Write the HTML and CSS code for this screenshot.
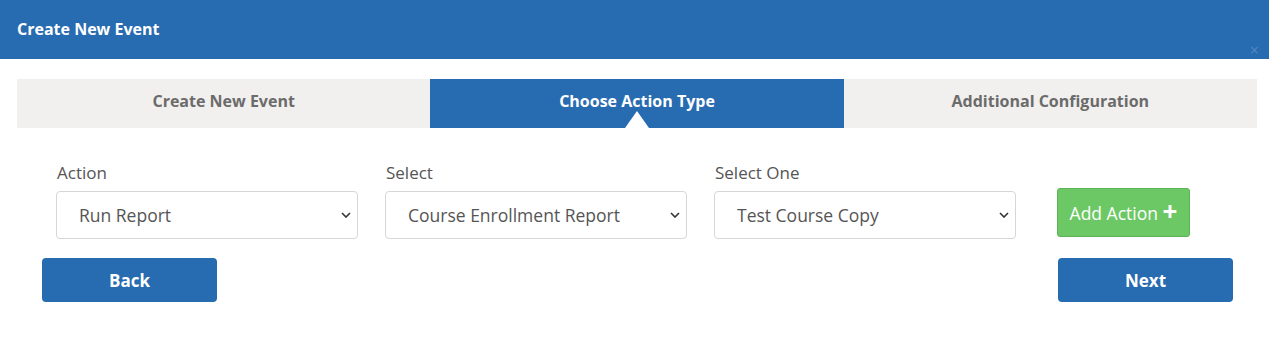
FILE: index.html
```html
<!DOCTYPE html>
<html lang="en">
<head>
  <meta charset="UTF-8" />
  <meta name="viewport" content="width=device-width, initial-scale=1.0" />
  <title>Create New Event</title>
  <link rel="stylesheet" href="styles.css">
</head>
<body>
  <div class="modal">
    <div class="modal-header">
      <h4>Create New Event</h4>
      <span class="close">&times;</span>
    </div>
    <div class="modal-body">
      <div class="steps">
        <div class="step">Create New Event</div>
        <div class="step active">Choose Action Type</div>
        <div class="step">Additional Configuration</div>
      </div>

      <div class="form-row">
        <div class="field">
          <label>Action</label>
          <div class="select-wrap">
            <select><option>Run Report</option></select>
            <svg class="chevron" viewBox="0 0 10 6" width="10" height="6"><path d="M1 1l4 4 4-4" fill="none" stroke="#333" stroke-width="1.6"/></svg>
          </div>
        </div>
        <div class="field">
          <label>Select</label>
          <div class="select-wrap">
            <select><option>Course Enrollment Report</option></select>
            <svg class="chevron" viewBox="0 0 10 6" width="10" height="6"><path d="M1 1l4 4 4-4" fill="none" stroke="#333" stroke-width="1.6"/></svg>
          </div>
        </div>
        <div class="field">
          <label>Select One</label>
          <div class="select-wrap">
            <select><option>Test Course Copy</option></select>
            <svg class="chevron" viewBox="0 0 10 6" width="10" height="6"><path d="M1 1l4 4 4-4" fill="none" stroke="#333" stroke-width="1.6"/></svg>
          </div>
        </div>
        <button class="btn-add">Add Action <span class="plus">+</span></button>
      </div>

      <div class="nav-row">
        <button class="btn">Back</button>
        <button class="btn">Next</button>
      </div>
    </div>
  </div>
</body>
</html>
```

FILE: styles.css
```css
body {
  margin: 0;
  font-family: 'Open Sans', 'Noto Sans', sans-serif;
  background: #fff;
  color: #555;
}
.modal-header {
  position: relative;
  height: 59px;
  background: #276bb1;
  color: #fff;
  display: flex;
  align-items: center;
  padding: 0 17px;
}
.modal-header h4 {
  margin: 0;
  font-size: 16px;
  font-weight: 700;
  padding-bottom: 1px;
}
.close {
  position: absolute;
  right: 10px;
  bottom: 1px;
  font-size: 16px;
  line-height: 16px;
  color: #4f88c4;
}
.modal-body {
  padding: 20px 12px 0 17px;
}
.steps {
  display: flex;
  height: 49px;
  background: #f1f0ee;
}
.step {
  flex: 1;
  position: relative;
  display: flex;
  align-items: center;
  justify-content: center;
  padding-bottom: 6px;
  font-size: 16px;
  font-weight: 700;
  color: #6b6b6b;
}
.step.active {
  background: #276bb1;
  color: #fff;
}
.step.active::after {
  content: '';
  position: absolute;
  bottom: 0;
  left: 50%;
  margin-left: -12px;
  border-left: 12px solid transparent;
  border-right: 12px solid transparent;
  border-bottom: 17px solid #fff;
}
.form-row {
  display: flex;
  align-items: flex-start;
  gap: 27px;
  padding: 34px 0 0 39px;
}
.field {
  width: 302px;
}
.field label {
  display: block;
  font-size: 17px;
  line-height: 22px;
  margin: 0 0 7px 1px;
  color: #555;
}
.select-wrap {
  position: relative;
}
.select-wrap select {
  appearance: none;
  -webkit-appearance: none;
  width: 100%;
  height: 48px;
  border: 1px solid #d6d6d6;
  border-radius: 4px;
  background: #fff;
  padding: 0 30px 0 22px;
  font-family: 'Open Sans', 'Noto Sans', sans-serif;
  font-size: 17.5px;
  color: #555;
}
.chevron {
  position: absolute;
  right: 7px;
  top: 21px;
}
.btn-add {
  margin: 26px 0 0 14px;
  width: 133px;
  height: 49px;
  background: #6cc864;
  border: 1px solid #5cb356;
  border-radius: 3px;
  color: #fff;
  font-family: 'Open Sans', 'Noto Sans', sans-serif;
  font-size: 17.5px;
  padding: 0;
  white-space: nowrap;
}
.btn-add .plus {
  font-size: 26px;
  font-weight: 700;
  line-height: 16px;
  vertical-align: -1px;
}
.nav-row {
  display: flex;
  justify-content: space-between;
  padding: 19px 24px 0 25px;
}
.btn {
  width: 175px;
  height: 44px;
  background: #276bb1;
  border: none;
  border-radius: 4px;
  color: #fff;
  font-family: 'Open Sans', 'Noto Sans', sans-serif;
  font-size: 17px;
  font-weight: 700;
}
```
